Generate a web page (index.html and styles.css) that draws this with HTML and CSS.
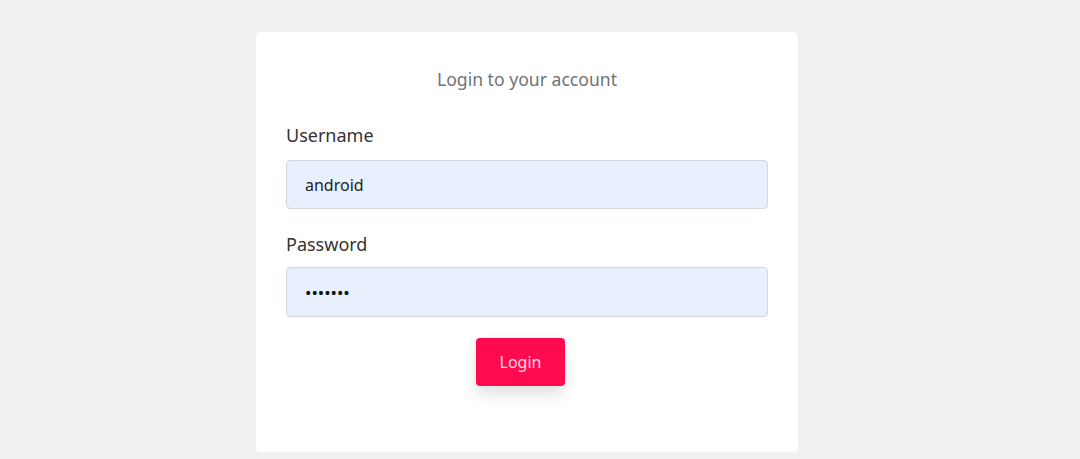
FILE: index.html
```html
<!DOCTYPE html>
<html>
<head>
<meta charset="utf-8">
<link rel="stylesheet" href="styles.css">
</head>
<body>
<div class="card">
  <div class="title">Login to your account</div>
  <div class="label first">Username</div>
  <div class="input">android</div>
  <div class="label">Password</div>
  <div class="input pw">•••••••</div>
  <div class="actions"><div class="btn">Login</div></div>
</div>
</body>
</html>
```
FILE: styles.css
```css
html, body { margin: 0; padding: 0; background: #f0f0f0; }
body { font-family: "Noto Sans", "Open Sans", sans-serif; padding-top: 32px; }
.card {
  margin-left: 256px;
  width: 482px;
  padding: 35px 30px 66px;
  background: #fff;
  border-radius: 5px;
}
.title { text-align: center; font-size: 17.6px; line-height: 24px; color: #6f7277; }
.label { font-size: 18px; line-height: 24px; color: #333; margin-top: 23px; }
.label.first { margin-top: 32px; }
.input {
  margin-top: 13px;
  height: 49px;
  box-sizing: border-box;
  border: 1px solid #d3d8e0;
  border-radius: 4px;
  background: #e8f0fe;
  padding: 0 18px;
  display: flex;
  align-items: center;
  font-size: 16px;
  color: #222;
}
.input.pw { font-size: 17px; color: #111; margin-top: 11px; height: 50px; }
.actions { margin-top: 21px; padding-left: 190px; display: flex; }
.btn {
  width: 89px; height: 48px;
  background: #ff0a4f;
  border-radius: 4px;
  color: #ffdbe4;
  font-size: 16px;
  display: flex; align-items: center; justify-content: center;
  box-shadow: 0 8px 16px rgba(0,0,0,0.12);
}
```
